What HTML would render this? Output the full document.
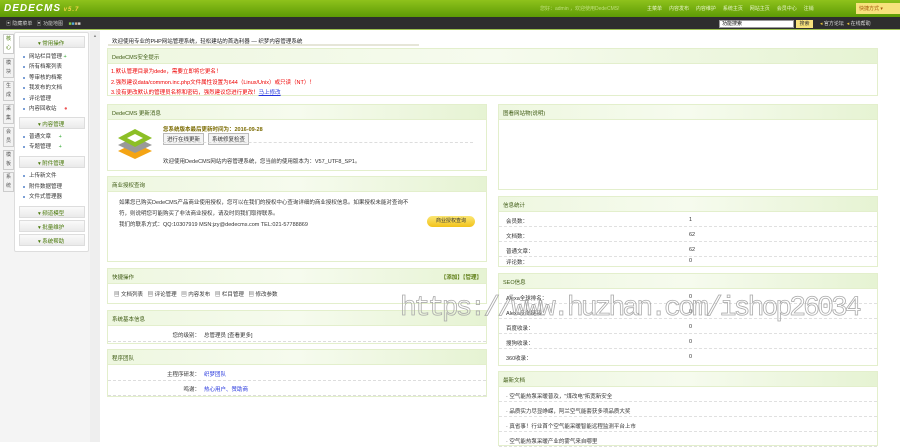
<!DOCTYPE html>
<html><head><meta charset="utf-8"><style>
*{margin:0;padding:0;box-sizing:border-box}
body{width:900px;height:442px;overflow:hidden;background:#fff;font-family:"Liberation Sans","Noto Sans CJK SC",sans-serif;font-size:5.5px;color:#333;position:relative}
.a{position:absolute}
.hd{left:0;top:0;width:900px;height:17px;background:linear-gradient(#8ec21c,#5d9a05)}
.bar{left:0;top:17px;width:900px;height:13px;background:#2e2e2e;border-bottom:1px solid #9bbf4f}
.logo{left:4px;top:3px;color:#fff;font:italic bold 10px "Liberation Sans",sans-serif;letter-spacing:1px}
.nav{top:5px;color:#e8f5c8;font-size:5px}
.pn{position:absolute;border:1px solid #e3efcc;background:#fff}
.ph{height:15px;background:linear-gradient(90deg,#eef7e0,#f6fbee 50%,#e6f3d3);border-bottom:1px solid #e3efcc;padding:4px 4px;color:#3d5a12;font-size:5.5px}
.rw{position:absolute;left:0;right:0;border-bottom:1px dashed #e0e0e0;height:15px;padding:5px 7px}
.v{position:absolute;left:190px;top:5px}
.tab{position:absolute;left:3px;width:11px;height:20px;background:#f2f2f2;border:1px solid #ccc;font-size:5px;text-align:center;line-height:9px;color:#555}
.sh{position:absolute;left:4px;width:66px;height:12px;background:linear-gradient(#fafafa,#eaeaea);border:1px solid #ddd;color:#4a7a0a;font-size:5.5px;padding:2px 0 0 18px}
.si{position:absolute;left:8px;font-size:5.5px;color:#333}
.si:before{content:"";display:inline-block;width:2px;height:2px;background:#7b9fd6;margin-right:4px;vertical-align:middle}
.red{color:#e00}
.lk{color:#2233dd}
</style></head><body>
<div class="a hd"></div>
<div class="a logo">DEDECMS<span style="font-size:6px;color:#f6d44a"> v5.7</span></div>
<div class="a nav" style="left:540px;color:#bfe07a">您好：admin ，欢迎使用DedeCMS!</div>
<div class="a nav" style="left:647px">主菜单 &nbsp; &nbsp; 内容发布 &nbsp; &nbsp; 内容维护 &nbsp; &nbsp; 系统主页 &nbsp; &nbsp; 网站主页 &nbsp; &nbsp; 会员中心 &nbsp; &nbsp; 注销</div>
<div class="a" style="left:856px;top:3px;width:44px;height:11px;background:#f7e27c;color:#a4560a;font-size:5px;padding:2px 3px">快捷方式 ▾</div>
<div class="a bar"></div>
<div class="a" style="left:6px;top:20px;color:#ccc;font-size:5px">▣ 隐藏菜单 &nbsp; ▣ 功能地图 &nbsp; &nbsp;<span style="color:#8c4">■</span><span style="color:#5ad">■</span><span style="color:#ca8">■</span><span style="color:#ccc">■</span></div>
<div class="a" style="left:719px;top:20px;width:75px;height:8px;background:#fff;border:1px solid #999;font-size:5px;color:#000;padding:0 2px;line-height:7px">功能搜索</div>
<div class="a" style="left:796px;top:20px;width:17px;height:8px;background:#f7e27c;font-size:5px;line-height:8px;text-align:center">搜索</div>
<div class="a" style="left:820px;top:20px;color:#ddd;font-size:5px"><span style="color:#e9c53a">◂</span> 官方论坛 &nbsp;<span style="color:#e9c53a">◂</span> 在线帮助</div>

<div class="a" style="left:0;top:31px;width:100px;height:411px;background:#f4f4f4"></div>
<div class="a" style="left:90px;top:31px;width:10px;height:411px;background:#eee"></div>
<div class="a" style="left:93px;top:33px;font-size:4px;color:#888">▲</div>
<div class="tab" style="top:34px;background:#fff;color:#4a7a0a">核<br>心</div>
<div class="tab" style="top:58px">模<br>块</div>
<div class="tab" style="top:81px">生<br>成</div>
<div class="tab" style="top:104px">采<br>集</div>
<div class="tab" style="top:127px">会<br>员</div>
<div class="tab" style="top:150px">模<br>板</div>
<div class="tab" style="top:172px">系<br>统</div>
<div class="a" style="left:14px;top:32px;width:75px;height:220px;background:#fff;border:1px solid #ddd;border-radius:2px">
<div class="sh" style="top:3px">▾ 常用操作</div>
<div class="si" style="top:19px">网站栏目管理 <span style="color:#3a3">+</span></div>
<div class="si" style="top:29px">所有档案列表</div>
<div class="si" style="top:40px">等审核的档案</div>
<div class="si" style="top:50px">我发布的文档</div>
<div class="si" style="top:61px">评论管理</div>
<div class="si" style="top:71px">内容回收站 &nbsp; &nbsp; <span style="color:#e55">●</span></div>
<div class="sh" style="top:84px">▾ 内容管理</div>
<div class="si" style="top:99px">普通文章 &nbsp; &nbsp; <span style="color:#3a3">+</span></div>
<div class="si" style="top:109px">专题管理 &nbsp; &nbsp; <span style="color:#3a3">+</span></div>
<div class="sh" style="top:123px">▾ 附件管理</div>
<div class="si" style="top:138px">上传新文件</div>
<div class="si" style="top:149px">附件数据管理</div>
<div class="si" style="top:159px">文件式管理器</div>
<div class="sh" style="top:173px">▾ 频道模型</div>
<div class="sh" style="top:187px">▾ 批量维护</div>
<div class="sh" style="top:201px">▾ 系统帮助</div>
</div>

<div class="a" style="left:112px;top:37px;font-size:5.5px;color:#222">欢迎使用专业的PHP网站管理系统，轻松建站的首选利器 — 织梦内容管理系统</div>
<div class="a" style="left:108px;top:44px;width:311px;height:2px;background:#e6e6d8"></div>

<div class="pn" style="left:107px;top:48px;width:771px;height:48px"><div class="ph">DedeCMS安全提示</div>
<div class="a red" style="left:3px;top:18px">1.默认管理目录为dede，需要立即将它更名！</div>
<div class="a red" style="left:3px;top:29px">2.强烈建议data/common.inc.php文件属性设置为644（Linux/Unix）或只读（NT）！</div>
<div class="a red" style="left:3px;top:39px">3.没有更改默认的管理员名称和密码，强烈建议您进行更改！<span class="lk" style="text-decoration:underline">马上修改</span></div></div>

<div class="pn" style="left:107px;top:104px;width:380px;height:67px"><div class="ph">DedeCMS 更新消息</div>
<svg class="a" style="left:8px;top:22px" width="38" height="34" viewBox="0 0 38 34"><path d="M2 24L19 16 36 24 19 32Z" fill="#f4a414"/><path d="M2 18L19 10 36 18 19 26Z" fill="#999"/><path d="M2 11L19 2 36 11 19 20Z" fill="#8cbf26"/><path d="M11 11L19 7 27 11 19 15Z" fill="#fff"/></svg>
<div class="a" style="left:55px;top:20px;color:#7a6a00;font-weight:bold">您系统版本最后更新时间为：2016-09-28</div>
<div class="a" style="left:55px;top:28px;border:1px solid #bbb;background:#f4f4f4;padding:1px 3px">进行在线更新</div>
<div class="a" style="left:100px;top:28px;border:1px solid #bbb;background:#f4f4f4;padding:1px 3px">系统修复检查</div>
<div class="a" style="left:55px;top:37px;width:310px;border-top:1px dashed #ddd"></div>
<div class="a" style="left:55px;top:52px">欢迎使用DedeCMS网站内容管理系统，您当前的使用版本为：V57_UTF8_SP1。</div></div>

<div class="pn" style="left:107px;top:176px;width:380px;height:86px"><div class="ph">商业授权查询</div>
<div class="a" style="left:11px;top:21px;line-height:11px;width:300px">如果您已购买DedeCMS产品商业使用授权，您可以在我们的授权中心查询详细的商业授权信息。如果授权未能对查询不符，则说明您可能购买了非法商业授权，请及时同我们取得联系。<br>我们的联系方式：QQ:10307919 MSN:jzy@dedecms.com TEL:021-57788869</div>
<div class="a" style="left:319px;top:39px;width:48px;height:11px;border-radius:6px;background:linear-gradient(#fbe673,#f2c21a);font-size:5px;text-align:center;line-height:11px">商业授权查询</div></div>

<div class="pn" style="left:107px;top:268px;width:380px;height:36px"><div class="ph">快捷操作<span style="float:right;color:#5a7a10;font-weight:bold">【添加】【管理】</span></div>
<div class="a" style="left:6px;top:21px">▤ 文档列表 &nbsp; ▤ 评论管理 &nbsp; ▤ 内容发布 &nbsp; ▤ 栏目管理 &nbsp; ▤ 修改参数</div></div>

<div class="pn" style="left:107px;top:310px;width:380px;height:34px"><div class="ph">系统基本信息</div>
<div class="a" style="left:0;right:0;top:16px;height:15px;border-bottom:1px dashed #ddd"><span class="a" style="right:286px;top:4px">您的级别：</span><span class="a" style="left:96px;top:4px">总管理员 [查看更多]</span></div></div>

<div class="pn" style="left:107px;top:349px;width:380px;height:48px"><div class="ph">程序团队</div>
<div class="a" style="left:0;right:0;top:16px;height:15px;border-bottom:1px dashed #ddd"><span class="a" style="right:286px;top:4px">主程序研发：</span><span class="a lk" style="left:96px;top:4px">织梦团队</span></div>
<div class="a" style="left:0;right:0;top:31px;height:15px;border-bottom:1px dashed #ddd"><span class="a" style="right:286px;top:4px">鸣谢：</span><span class="a lk" style="left:96px;top:4px">热心用户、赞助商</span></div></div>

<div class="pn" style="left:498px;top:104px;width:380px;height:86px"><div class="ph">图看网站物(说明)</div></div>

<div class="pn" style="left:498px;top:196px;width:380px;height:71px"><div class="ph">信息统计</div>
<div class="rw" style="top:15px">会员数：<span class="v">1</span></div>
<div class="rw" style="top:30px">文档数：<span class="v">62</span></div>
<div class="rw" style="top:45px">普通文章：<span class="v">62</span></div>
<div class="rw" style="top:58px;border:0;height:12px;padding-top:3px">评论数：<span class="v" style="top:3px">0</span></div></div>

<div class="pn" style="left:498px;top:273px;width:380px;height:93px"><div class="ph">SEO信息</div>
<div class="rw" style="top:15px">Alexa全球排名：<span class="v">0</span></div>
<div class="rw" style="top:30px">Alexa反向链接：<span class="v">0</span></div>
<div class="rw" style="top:45px">百度收录：<span class="v">0</span></div>
<div class="rw" style="top:60px">搜狗收录：<span class="v">0</span></div>
<div class="rw" style="top:75px;border:0">360收录：<span class="v">0</span></div></div>

<div class="pn" style="left:498px;top:371px;width:380px;height:75px"><div class="ph">最新文档</div>
<div class="rw" style="top:15px">· 空气能热泵采暖普及，"煤改电"拓宽新安全</div>
<div class="rw" style="top:30px">· 品质实力尽显峥嵘，阿兰空气能套获多项品质大奖</div>
<div class="rw" style="top:45px">· 真省事！行业首个空气能采暖智能远程监测平台上市</div>
<div class="rw" style="top:60px">· 空气能热泵采暖产业的雾气来自哪里</div></div>

<div class="a" style="left:400px;top:293px;font:28px 'Liberation Mono',monospace;color:transparent;-webkit-text-stroke:0.8px #aaa;letter-spacing:-2.9px;white-space:nowrap">https://www.huzhan.com/ishop26034</div>
</body></html>
